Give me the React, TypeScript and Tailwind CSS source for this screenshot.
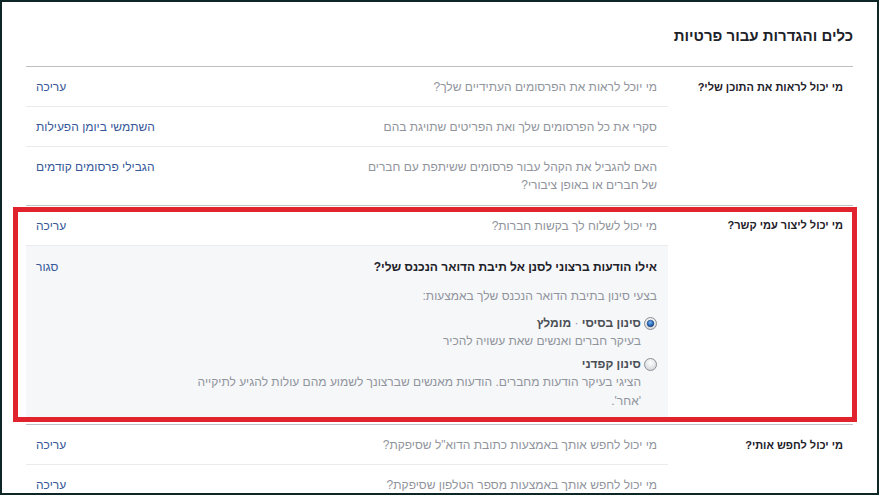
import React from "react";

const font = { fontFamily: '"Liberation Sans", Arial, sans-serif' };

function Row({ text, action, last, h = "h-[40px]" }: { text: React.ReactNode; action: string; last?: boolean; h?: string }) {
  return (
    <div className={`flex ${h} items-start pt-[12px] pr-[11px] pl-[10px] ${last ? "" : "border-b border-[#e9ebee]"}`}>
      <div className="flex-1 text-[12px] leading-[16px] text-[#90949c]">{text}</div>
      <div className="text-[12px] leading-[16px] text-[#365899]">{action}</div>
    </div>
  );
}

function Radio({ checked }: { checked?: boolean }) {
  return (
    <svg width="13" height="13" viewBox="0 0 13 13" className="shrink-0">
      <defs>
        <radialGradient id={checked ? "rg1" : "rg2"} cx="50%" cy="35%" r="60%">
          <stop offset="0%" stopColor="#ffffff" />
          <stop offset="100%" stopColor="#d6d8dc" />
        </radialGradient>
        <radialGradient id="dot" cx="45%" cy="35%" r="65%">
          <stop offset="0%" stopColor="#7fb6f0" />
          <stop offset="60%" stopColor="#2a6fc4" />
          <stop offset="100%" stopColor="#163f78" />
        </radialGradient>
      </defs>
      <circle cx="6.5" cy="6.5" r="6" fill={`url(#${checked ? "rg1" : "rg2"})`} stroke="#8d9096" strokeWidth="1" />
      {checked && <circle cx="6.5" cy="6.5" r="3.3" fill="url(#dot)" stroke="#1a3f6e" strokeWidth="0.6" />}
    </svg>
  );
}

const labelCls = "w-[185px] pr-[10px] text-[11px] leading-[16px] font-bold text-[#1d2129]";

export default function App() {
  return (
    <div style={font} dir="rtl" className="relative w-[879px] h-[495px] overflow-hidden bg-white border-2 border-[#0f2626]">
      <div className="px-[24px]">
        {/* Title */}
        <div className="h-[65px] pt-[25px] border-b border-[#bdbfc3]">
          <div className="text-[15px] leading-[18px] font-bold text-[#1d2129]">כלים והגדרות עבור פרטיות</div>
        </div>

        {/* Section 1 */}
        <div className="flex border-b border-[#bec2c9]">
          <div className={`${labelCls} pt-[12px]`}>מי יכול לראות את התוכן שלי?</div>
          <div className="w-[642px]">
            <Row text="מי יוכל לראות את הפרסומים העתידיים שלך?" action="עריכה" />
            <Row text="סקרי את כל הפרסומים שלך ואת הפריטים שתויגת בהם" action="השתמשי ביומן הפעילות" />
            <div className="flex h-[58px] items-start pt-[11px] pr-[11px] pl-[10px]">
              <div className="flex-1 text-[12px] leading-[18px] text-[#90949c]">
                האם להגביל את הקהל עבור פרסומים ששיתפת עם חברים
                <br />
                של חברים או באופן ציבורי?
              </div>
              <div className="pt-[1px] text-[12px] leading-[16px] text-[#365899]">הגבילי פרסומים קודמים</div>
            </div>
          </div>
        </div>

        {/* Section 2 */}
        <div className="flex h-[219px] border-b border-[#bec2c9]">
          <div className={`${labelCls} pt-[11px]`}>מי יכול ליצור עמי קשר?</div>
          <div className="w-[642px]">
            <Row text="מי יכול לשלוח לך בקשות חברות?" action="עריכה" />
            <div className="h-[171px] bg-[#f6f7f9] pt-[13px] pr-[11px] pl-[10px]">
              <div className="flex items-start">
                <div className="flex-1 text-[12px] leading-[16px] font-bold text-[#1d2129]">אילו הודעות ברצוני לסנן אל תיבת הדואר הנכנס שלי?</div>
                <div className="text-[12px] leading-[16px] text-[#365899]">סגור</div>
              </div>
              <div className="mt-[13px] text-[12px] leading-[16px] text-[#90949c]">בצעי סינון בתיבת הדואר הנכנס שלך באמצעות:</div>
              <div className="mt-[10px] flex items-start gap-[3px]">
                <div className="pt-[3px]"><Radio checked /></div>
                <div>
                  <div className="text-[12px] leading-[18px] font-bold text-[#4b4f56]">
                    סינון בסיסי <span className="font-normal text-[#90949c]">·</span> מומלץ
                  </div>
                  <div className="text-[12px] leading-[18px] text-[#90949c]">בעיקר חברים ואנשים שאת עשויה להכיר</div>
                </div>
              </div>
              <div className="mt-[5px] flex items-start gap-[3px]">
                <div className="pt-[3px]"><Radio /></div>
                <div>
                  <div className="text-[12px] leading-[18px] font-bold text-[#4b4f56]">סינון קפדני</div>
                  <div className="text-[12px] leading-[19px] text-[#90949c]">
                    הציגי בעיקר הודעות מחברים. הודעות מאנשים שברצונך לשמוע מהם עולות להגיע לתיקייה
                    <br />
                    'אחר'.
                  </div>
                </div>
              </div>
            </div>
          </div>
        </div>

        {/* Section 3 */}
        <div className="flex">
          <div className={`${labelCls} pt-[12px]`}>מי יכול לחפש אותי?</div>
          <div className="w-[642px]">
            <Row text='מי יכול לחפש אותך באמצעות כתובת הדוא"ל שסיפקת?' action="עריכה" />
            <Row text="מי יכול לחפש אותך באמצעות מספר הטלפון שסיפקת?" action="עריכה" last />
          </div>
        </div>
      </div>

      {/* Red annotation box */}
      <div className="absolute left-[11px] top-[205px] w-[844px] h-[215px] border-[5px] border-[#e0232d] pointer-events-none" />
    </div>
  );
}
